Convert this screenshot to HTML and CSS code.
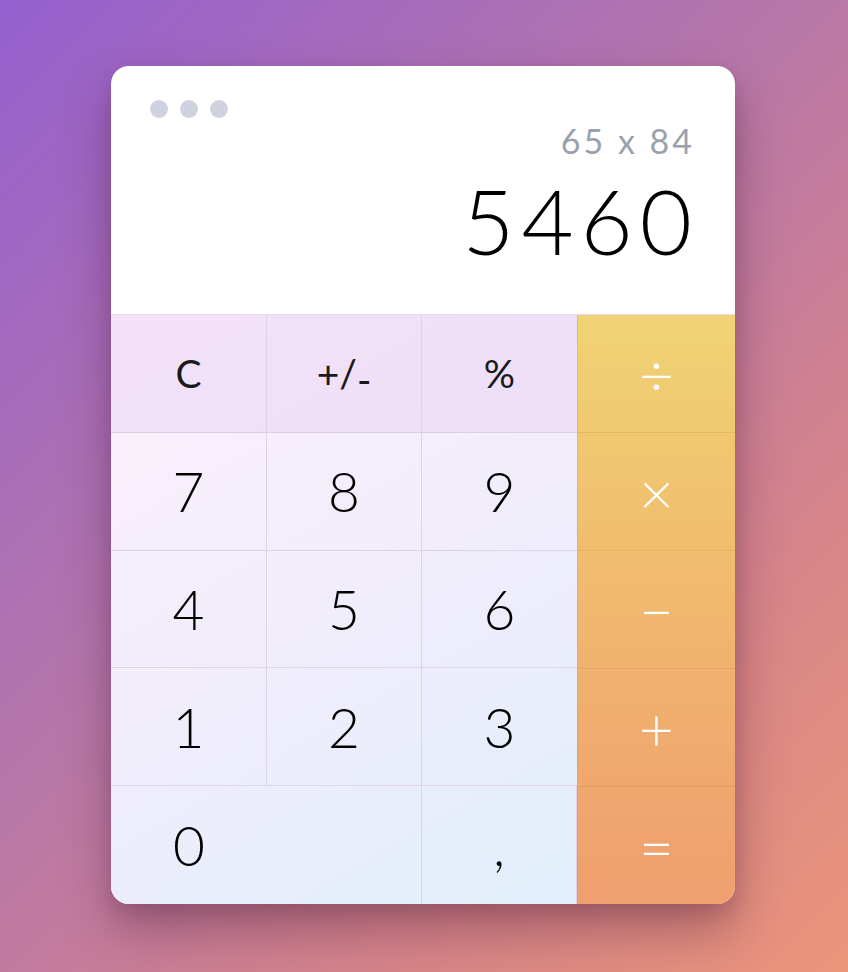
FILE: index.html
```html
<!DOCTYPE html>
<html lang="en">
<head>
<meta charset="utf-8">
<title>Calculator</title>
<link rel="stylesheet" href="styles.css">
</head>
<body>
<main class="stage">
  <section class="calc">
    <header class="display">
      <div class="dots"><span class="dot"></span><span class="dot"></span><span class="dot"></span></div>
      <div class="expr">65 x 84</div>
      <div class="result">5460</div>
    </header>
    <div class="keypad">
      <div class="nums">
        <button class="key fn">C</button>
        <button class="key fn">+/<span class="minus-low">-</span></button>
        <button class="key fn">%</button>
        <button class="key">7</button>
        <button class="key">8</button>
        <button class="key">9</button>
        <button class="key">4</button>
        <button class="key">5</button>
        <button class="key">6</button>
        <button class="key">1</button>
        <button class="key">2</button>
        <button class="key">3</button>
        <button class="key zero"><span class="zero-label">0</span></button>
        <button class="key">,</button>
      </div>
      <div class="ops">
        <button class="op">÷</button>
        <button class="op">×</button>
        <button class="op">−</button>
        <button class="op">+</button>
        <button class="op">=</button>
      </div>
    </div>
  </section>
</main>
</body>
</html>
```
FILE: styles.css
```css
* { box-sizing: border-box; }
html, body { margin: 0; padding: 0; }
body {
  min-height: 100vh;
  background: linear-gradient(135deg, #9460cf 0%, #b877a8 45%, #d88589 75%, #ec957a 100%);
  font-family: "Lato", "Inter", sans-serif;
}
.stage {
  min-height: 972px;
  display: flex;
  align-items: center;
  justify-content: center;
  padding-right: 2px;
  padding-bottom: 2px;
}
.calc {
  width: 624px;
  height: 838px;
  border-radius: 18px;
  overflow: hidden;
  background: #fff;
  display: flex;
  flex-direction: column;
  box-shadow: 0 26px 50px rgba(70, 25, 55, 0.38), 0 8px 16px rgba(70, 25, 55, 0.14);
}
.display {
  height: 248px;
  padding: 34px 43px 0 39px;
  display: flex;
  flex-direction: column;
}
.dots { display: flex; gap: 12px; height: 18px; }
.dot { width: 18px; height: 18px; border-radius: 50%; background: #cfd3e0; }
.expr {
  margin-top: 6px;
  margin-right: -3px;
  text-align: right;
  font-size: 34px;
  line-height: 34px;
  color: #99a1ad;
  font-weight: 400;
  letter-spacing: 3px;
}
.result {
  margin-top: 17px;
  text-align: right;
  font-size: 90px;
  line-height: 90px;
  color: #000;
  font-weight: 300;
  letter-spacing: 7px;
  margin-right: -7px;
}
.keypad {
  flex: 1;
  display: flex;
  border-top: 1px solid #e6dbee;
}
.nums {
  width: 466px;
  display: grid;
  grid-template-columns: 156px 155px 155px;
  grid-auto-rows: 1fr;
  background: linear-gradient(150deg, #fcf0fb 0%, #f1edfb 50%, #e1eefb 100%);
}
.key {
  border: 0;
  border-right: 1px solid #ddd3e6;
  border-bottom: 1px solid #ddd3e6;
  background: transparent;
  font-family: inherit;
  font-size: 55px;
  font-weight: 300;
  color: #000;
  padding: 0;
  display: flex;
  align-items: center;
  justify-content: center;
}
.key:nth-child(3n) { border-right: 0; }
.key:nth-last-child(-n+2) { border-bottom: 0; }
.key.fn {
  font-size: 39px;
  font-weight: 400;
  color: #1a1a1a;
  background: rgba(226, 200, 243, 0.36);
  border-bottom-color: #dccfe5;
}
.minus-low { position: relative; top: 6px; }
.key.zero {
  grid-column: span 2;
  justify-content: flex-start;
  border-right: 1px solid #ddd3e6;
}
.zero-label { width: 156px; text-align: center; }
.ops {
  flex: 1;
  display: flex;
  flex-direction: column;
  background: linear-gradient(180deg, #f0d374 0%, #f0bd6f 40%, #f0a86e 78%, #f09f6e 100%);
  border-left: 1px solid rgba(215, 150, 70, 0.3);
}
.op {
  flex: 1;
  border: 0;
  border-bottom: 1px solid rgba(190, 120, 60, 0.2);
  background: transparent;
  color: #fff;
  font-family: inherit;
  font-size: 60px;
  font-weight: 300;
  padding: 0;
  display: flex;
  align-items: center;
  justify-content: center;
}
.op:last-child { border-bottom: 0; }
```
